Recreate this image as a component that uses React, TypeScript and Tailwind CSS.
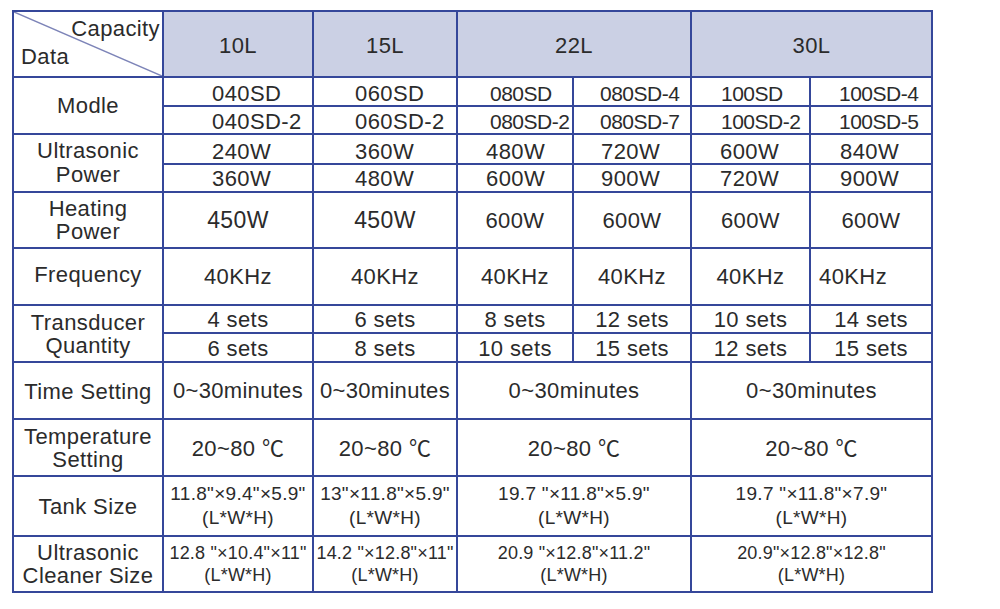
import React from 'react';

const border = 'bg-[#35479a]';

const Cell = ({ children, className = '' }: { children?: React.ReactNode; className?: string }) => (
  <div className={`bg-white flex items-center justify-center text-center whitespace-nowrap ${className}`}>{children}</div>
);

const modleA = ['040SD', '060SD', '080SD', '080SD-4', '100SD', '100SD-4'];
const modleB = ['040SD-2', '060SD-2', '080SD-2', '080SD-7', '100SD-2', '100SD-5'];
const modlePad = ['pl-[48px]', 'pl-[41px]', 'pl-[32px]', 'pl-[26px]', 'pl-[29px]', 'pl-[28px]'];
const powerA = ['240W', '360W', '480W', '720W', '600W', '840W'];
const powerB = ['360W', '480W', '600W', '900W', '720W', '900W'];
const powerPad = ['pl-[48px]', 'pl-[41px]', 'pl-[28px]', 'pl-[27px]', 'pl-[28px]', 'pl-[29px]'];
const transA = ['4 sets', '6 sets', '8 sets', '12 sets', '10 sets', '14 sets'];
const transB = ['6 sets', '8 sets', '10 sets', '15 sets', '12 sets', '15 sets'];

const Label = ({ lines }: { lines: string[] }) => (
  <Cell className="flex-col leading-[23px]">
    {lines.map((l) => (
      <span key={l}>{l}</span>
    ))}
  </Cell>
);

const SizeCell = ({ top, span, size }: { top: string; span?: boolean; size: string }) => (
  <Cell className={`flex-col ${size} ${span ? 'col-span-2' : ''}`}>
    <span>{top}</span>
    <span>(L*W*H)</span>
  </Cell>
);

const tank = 'text-[19px] tracking-[0.3px] leading-[24px]';
const outer = 'text-[18px] tracking-[0.2px] leading-[22px]';

const App = () => {
  return (
    <div className="w-[1000px] h-[609px] bg-white font-['Liberation_Sans','Noto_Sans_CJK_SC',sans-serif] text-[22px] tracking-[0.4px] text-[#2b2b2b]">
      <div className="pt-[10px] pl-[12px]">
        <div
          className={`grid w-[921px] p-[2px] gap-[2px] ${border} grid-cols-[148px_148px_142px_114px_116px_117px_120px] grid-rows-[64px_27px_26px_28px_26px_54px_55px_26px_27px_55px_55px_58px_54px]`}
        >
          {/* header */}
          <div className="bg-white relative flex flex-col justify-between pt-[5px] pb-[8px] leading-[23px]">
            <svg className="absolute inset-0" width="148" height="64" viewBox="0 0 148 64">
              <line x1="0" y1="0" x2="148" y2="64" stroke="#7d84b8" strokeWidth="1.5" />
            </svg>
            <span className="relative self-end pr-[2px]">Capacity</span>
            <span className="relative self-start pl-[7px]">Data</span>
          </div>
          <Cell className="bg-[#cbd0e4]! pt-[2px]">10L</Cell>
          <Cell className="bg-[#cbd0e4]! pt-[2px]">15L</Cell>
          <Cell className="bg-[#cbd0e4]! col-span-2 pt-[2px]">22L</Cell>
          <Cell className="bg-[#cbd0e4]! col-span-2 pt-[2px]">30L</Cell>

          {/* modle */}
          <Cell className="row-span-2">Modle</Cell>
          {modleA.map((m, i) => (
            <Cell
              key={'ma' + i}
              className={`justify-start! pt-[4px] ${modlePad[i]} ${i > 1 ? 'text-[21px] tracking-[-0.5px]' : ''}`}
            >
              {m}
            </Cell>
          ))}
          {modleB.map((m, i) => (
            <Cell
              key={'mb' + i}
              className={`justify-start! pt-[3px] ${modlePad[i]} ${i > 1 ? 'text-[21px] tracking-[-0.5px]' : ''}`}
            >
              {m}
            </Cell>
          ))}

          {/* ultrasonic power */}
          <Cell className="row-span-2 flex-col leading-[24px]">
            <span>Ultrasonic</span>
            <span>Power</span>
          </Cell>
          {powerA.map((m, i) => (
            <Cell key={'pa' + i} className={`justify-start! pt-[4px] ${powerPad[i]}`}>
              {m}
            </Cell>
          ))}
          {powerB.map((m, i) => (
            <Cell key={'pb' + i} className={`justify-start! pt-[1px] ${powerPad[i]}`}>
              {m}
            </Cell>
          ))}

          {/* heating */}
          <Label lines={['Heating', 'Power']} />
          {['450W', '450W', '600W', '600W', '600W', '600W'].map((m, i) => (
            <Cell key={'h' + i} className={i < 2 ? 'text-[23px]' : ''}>
              {m}
            </Cell>
          ))}

          {/* frequency */}
          <Cell className="pb-[4px]">Frequency</Cell>
          {['40KHz', '40KHz', '40KHz', '40KHz', '40KHz'].map((m, i) => (
            <Cell key={'f' + i}>{m}</Cell>
          ))}
          <Cell className="justify-start! pl-[8px]">40KHz</Cell>

          {/* transducer */}
          <Cell className="row-span-2 flex-col leading-[23px]">
            <span>Transducer</span>
            <span>Quantity</span>
          </Cell>
          {transA.map((m, i) => (
            <Cell key={'ta' + i} className="pt-[1px]">
              {m}
            </Cell>
          ))}
          {transB.map((m, i) => (
            <Cell key={'tb' + i} className="pt-[1px]">
              {m}
            </Cell>
          ))}

          {/* time setting */}
          <Cell className="pt-[1px]">Time Setting</Cell>
          <Cell className="tracking-[0.3px]">0~30minutes</Cell>
          <Cell className="tracking-[0.3px]">0~30minutes</Cell>
          <Cell className="col-span-2">0~30minutes</Cell>
          <Cell className="col-span-2">0~30minutes</Cell>

          {/* temperature */}
          <Label lines={['Temperature', 'Setting']} />
          <Cell className="pt-[1px]">20~80 ℃</Cell>
          <Cell className="pt-[1px]">20~80 ℃</Cell>
          <Cell className="col-span-2 pt-[1px]">20~80 ℃</Cell>
          <Cell className="col-span-2 pt-[1px]">20~80 ℃</Cell>

          {/* tank size */}
          <Cell>Tank Size</Cell>
          <SizeCell top={'11.8"×9.4"×5.9"'} size={tank} />
          <SizeCell top={'13"×11.8"×5.9"'} size={tank} />
          <SizeCell top={'19.7 "×11.8"×5.9"'} span size={tank} />
          <SizeCell top={'19.7 "×11.8"×7.9"'} span size={tank} />

          {/* cleaner size */}
          <Label lines={['Ultrasonic', 'Cleaner Size']} />
          <SizeCell top={'12.8 "×10.4"×11"'} size={outer} />
          <SizeCell top={'14.2 "×12.8"×11"'} size={outer} />
          <SizeCell top={'20.9 "×12.8"×11.2"'} span size={outer} />
          <SizeCell top={'20.9"×12.8"×12.8"'} span size={outer} />
        </div>
      </div>
    </div>
  );
};

export default App;
